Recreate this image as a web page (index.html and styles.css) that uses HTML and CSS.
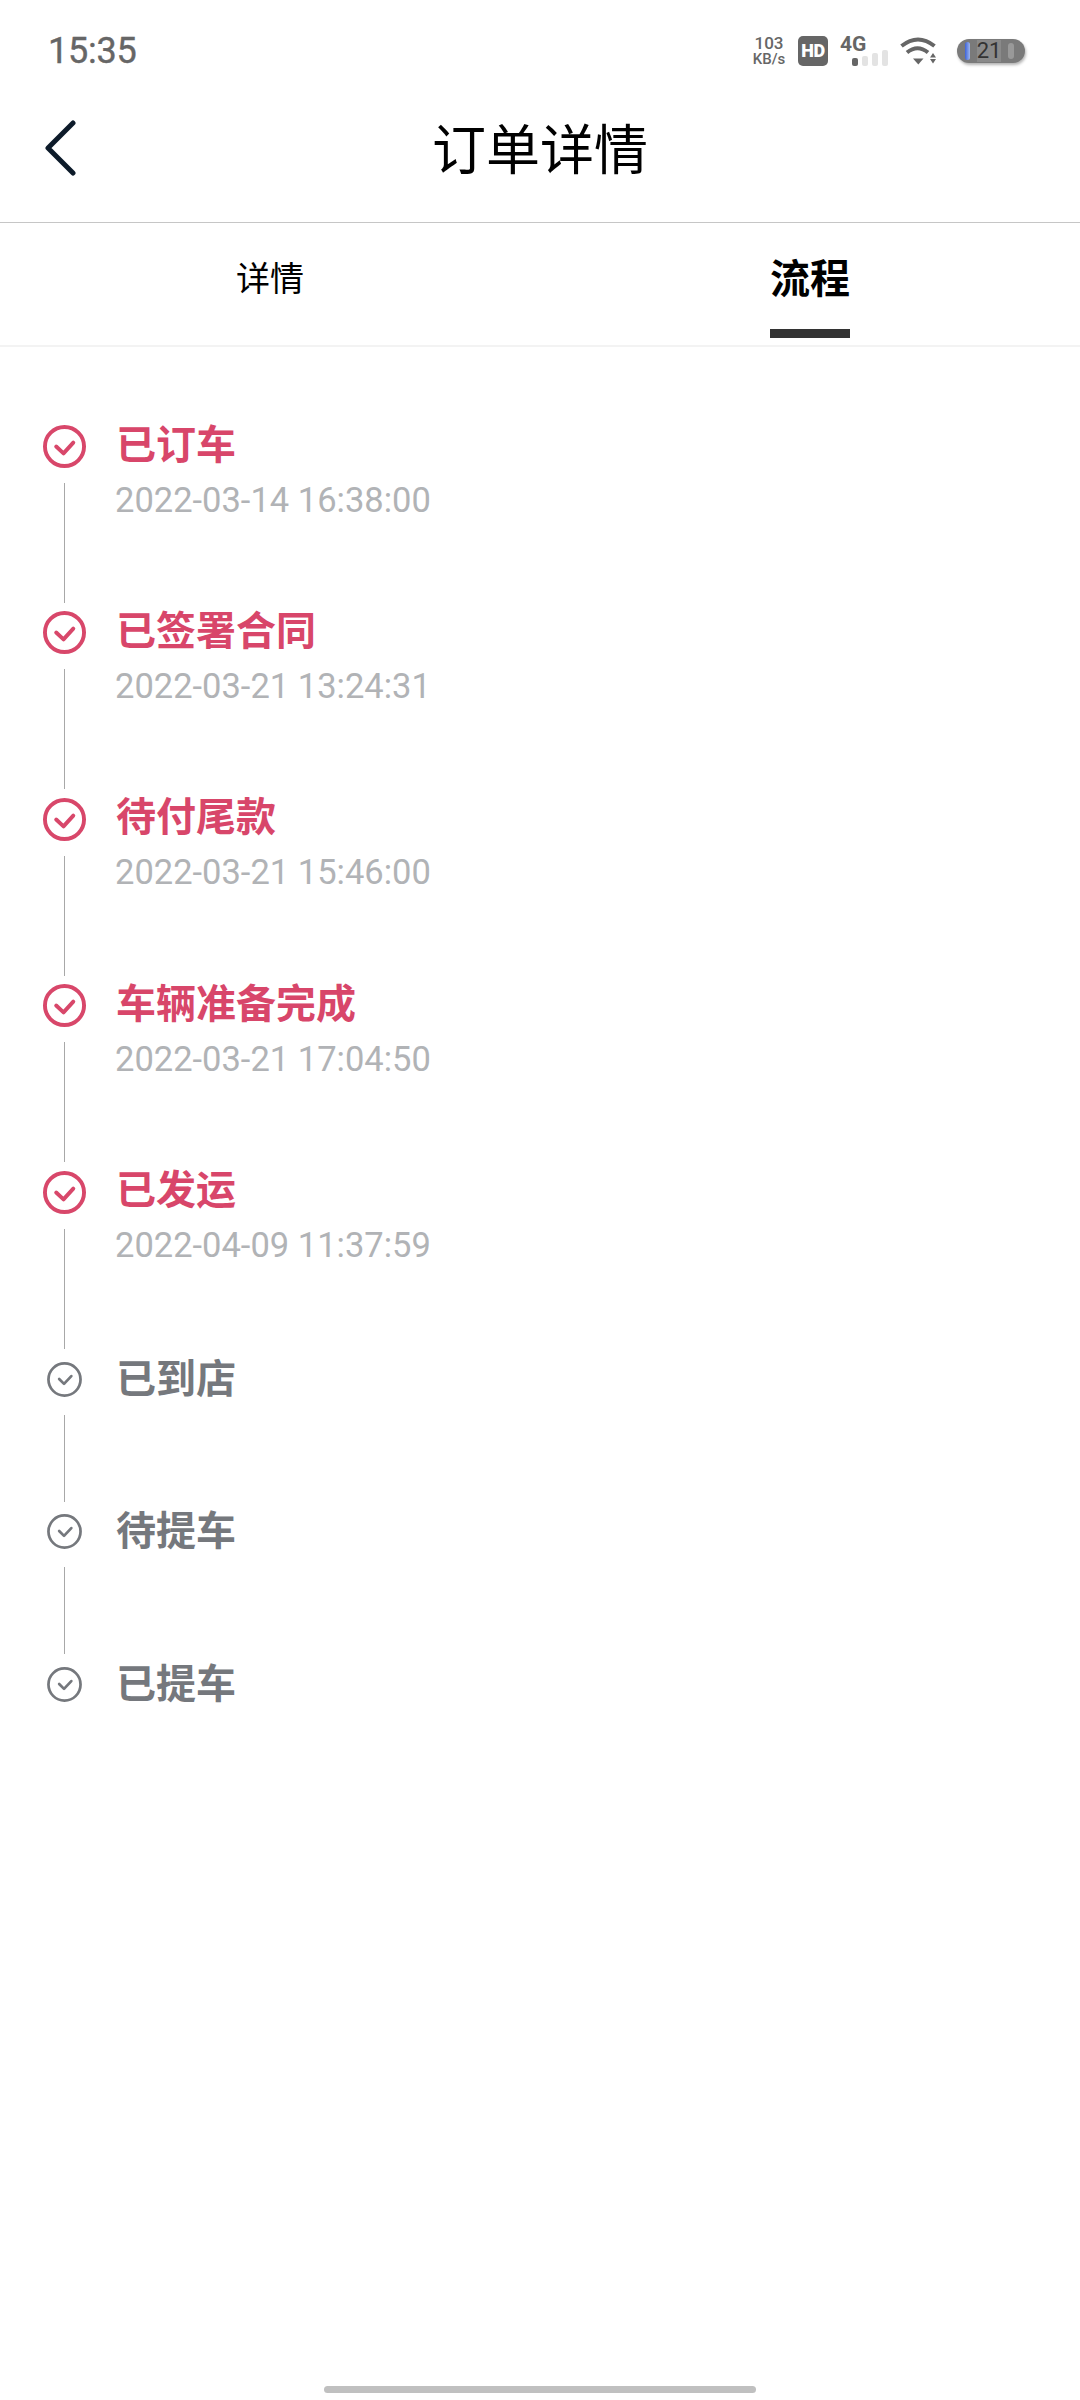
FILE: index.html
```html
<!DOCTYPE html>
<html lang="zh">
<head>
<meta charset="utf-8">
<title>订单详情</title>
<link rel="stylesheet" href="styles.css">
</head>
<body>
<div class="page">
  <div class="status">
    <span class="time">15:35</span>
    <div class="status-icons">
      <div class="speed"><span class="speed-value">103</span><span class="speed-unit">KB/s</span></div>
      <span class="hd">HD</span>
      <div class="net">
        <span class="net-label">4G</span>
        <div class="bars"><i class="bar on b1"></i><i class="bar b2"></i><i class="bar b3"></i><i class="bar b4"></i></div>
      </div>
      <svg class="wifi" viewBox="0 0 38 28" width="38" height="28">
        <path d="M2.500 9Q19-4 35.500 9" fill="none" stroke="#666" stroke-width="4"/>
        <path d="M8 15.500Q18.500 7 29 15.500" fill="none" stroke="#666" stroke-width="4"/>
        <path d="M14 21.500h10.500l-5.200 6z" fill="#666"/>
        <path d="M34 16l3 4.500h-6zM31 22h6l-3 4.500z" fill="#666"/>
      </svg>
      <div class="battery"><i class="cell-low"></i><span class="level">21</span><i class="cell-end"></i></div>
    </div>
  </div>

  <header class="nav">
    <svg class="back" viewBox="0 0 32 56" width="32" height="56">
      <path d="M29 3 4 28l25 25" fill="none" stroke="#0d1b2a" stroke-width="5" stroke-linecap="round" stroke-linejoin="round"/>
    </svg>
    <h1 class="title">订单详情</h1>
  </header>

  <nav class="tabs">
    <div class="tab">详情</div>
    <div class="tab active"><span class="tab-label">流程</span></div>
  </nav>

  <main class="timeline">
    <section class="step done">
      <div class="rail">
        <svg class="icon" viewBox="0 0 44 44"><circle cx="22" cy="22" r="20" /><path d="M13.500 22l7.500 7L31 18"/></svg>
        <i class="line"></i>
      </div>
      <div class="body"><div class="name">已订车</div><div class="date">2022-03-14 16:38:00</div></div>
    </section>
    <section class="step done">
      <div class="rail">
        <svg class="icon" viewBox="0 0 44 44"><circle cx="22" cy="22" r="20" /><path d="M13.500 22l7.500 7L31 18"/></svg>
        <i class="line"></i>
      </div>
      <div class="body"><div class="name">已签署合同</div><div class="date">2022-03-21 13:24:31</div></div>
    </section>
    <section class="step done">
      <div class="rail">
        <svg class="icon" viewBox="0 0 44 44"><circle cx="22" cy="22" r="20" /><path d="M13.500 22l7.500 7L31 18"/></svg>
        <i class="line"></i>
      </div>
      <div class="body"><div class="name">待付尾款</div><div class="date">2022-03-21 15:46:00</div></div>
    </section>
    <section class="step done">
      <div class="rail">
        <svg class="icon" viewBox="0 0 44 44"><circle cx="22" cy="22" r="20" /><path d="M13.500 22l7.500 7L31 18"/></svg>
        <i class="line"></i>
      </div>
      <div class="body"><div class="name">车辆准备完成</div><div class="date">2022-03-21 17:04:50</div></div>
    </section>
    <section class="step done last-done">
      <div class="rail">
        <svg class="icon" viewBox="0 0 44 44"><circle cx="22" cy="22" r="20" /><path d="M13.500 22l7.500 7L31 18"/></svg>
        <i class="line"></i>
      </div>
      <div class="body"><div class="name">已发运</div><div class="date">2022-04-09 11:37:59</div></div>
    </section>
    <section class="step todo">
      <div class="rail">
        <svg class="icon" viewBox="0 0 36 36"><circle cx="18" cy="18" r="16.500" /><path d="M12.500 17.500l5 5L25 14.500"/></svg>
        <i class="line"></i>
      </div>
      <div class="body"><div class="name">已到店</div></div>
    </section>
    <section class="step todo">
      <div class="rail">
        <svg class="icon" viewBox="0 0 36 36"><circle cx="18" cy="18" r="16.500" /><path d="M12.500 17.500l5 5L25 14.500"/></svg>
        <i class="line"></i>
      </div>
      <div class="body"><div class="name">待提车</div></div>
    </section>
    <section class="step todo final">
      <div class="rail">
        <svg class="icon" viewBox="0 0 36 36"><circle cx="18" cy="18" r="16.500" /><path d="M12.500 17.500l5 5L25 14.500"/></svg>
      </div>
      <div class="body"><div class="name">已提车</div></div>
    </section>
  </main>

  <div class="home-bar"></div>
</div>
</body>
</html>
```

FILE: styles.css
```css
* { box-sizing: border-box; }
html, body { margin: 0; padding: 0; background: #fff; }
body { font-family: "Noto Sans CJK SC", "Noto Sans", sans-serif; }
.page { width: 1080px; height: 2400px; display: flex; flex-direction: column; background: #fff; position: relative; overflow: hidden; }

/* status bar */
.status { height: 100px; padding: 2px 55px 0 48px; display: flex; align-items: center; justify-content: space-between; }
.time { font: 400 36px/1 Roboto, sans-serif; color: #666; -webkit-text-stroke: .4px #666; letter-spacing: -.2px; }
.status-icons { display: flex; align-items: center; height: 40px; }
.speed { display: flex; flex-direction: column; align-items: center; width: 36px; color: #666; margin-right: 11px; }
.speed-value { font: 500 17px/16px Roboto, sans-serif; }
.speed-unit { font: 500 15px/16px Roboto, sans-serif; }
.hd { width: 30px; height: 30px; border-radius: 5px; background: #666; color: #fff; font: 900 18px/30px Roboto, sans-serif; text-align: center; letter-spacing: -.5px; margin-right: 12px; }
.net { width: 48px; height: 30px; position: relative; margin-right: 11px; }
.net-label { position: absolute; left: 0; top: -4px; font: 700 21px/24px Roboto, sans-serif; color: #666; }
.bars { position: absolute; left: 12px; top: 10px; height: 20px; width: 36px; display: flex; align-items: flex-end; gap: 4px; }
.bar { width: 6px; background: #e3e3e3; border-radius: 2px; }
.b1 { height: 8px; } .b2 { height: 10px; } .b3 { height: 13px; } .b4 { height: 16px; }
.bar.on { background: #666; }
.wifi { margin-right: 20px; }
.battery { width: 68px; height: 24px; border-radius: 12px; background: #7a7a7a; box-shadow: 1px 2px 3px rgba(0,0,0,.3); display: flex; align-items: center; justify-content: space-between; padding: 0 11px 0 8px; }
.cell-low { width: 5px; height: 18px; border-radius: 3px; background: linear-gradient(90deg, #3d63d8, #9fb7ee); }
.cell-end { width: 6px; height: 16px; border-radius: 3px; background: #999; }
.level { font: 400 22px/1 Roboto, sans-serif; color: #333; background: #8a8a8a; }

/* nav */
.nav { height: 123px; border-bottom: 1px solid #c6c6c6; display: flex; align-items: center; justify-content: center; position: relative; }
.back { position: absolute; left: 44px; top: 20px; }
.title { margin: 0; font-size: 54px; font-weight: 400; line-height: 1; color: #000; position: relative; top: -14px; }

/* tabs */
.tabs { height: 124px; border-bottom: 2px solid #f3f3f3; display: flex; }
.tab { flex: 1; display: flex; justify-content: center; align-items: flex-start; padding-top: 32px; font-size: 34px; line-height: 44px; color: #000; }
.tab.active { padding-top: 26px; font-size: 40px; line-height: 54px; font-weight: 700; }
.tab-label { display: block; height: 89px; width: 80px; text-align: center; border-bottom: 9px solid #333; }

/* timeline */
.timeline { padding: 78px 0 0 43px; display: flex; flex-direction: column; }
.step { display: flex; }
.rail { width: 43px; display: flex; flex-direction: column; align-items: center; flex: none; }
.icon { display: block; fill: none; stroke-width: 4; stroke-linecap: round; stroke-linejoin: round; }
.line { display: block; width: 1px; background: #a8a8a8; }
.body { margin-left: 30px; }
.name { font-size: 40px; font-weight: 700; line-height: 50px; }
.date { font: 400 34.500px/40px Roboto, sans-serif; color: #b1b3b6; margin-top: 13px; margin-left: -1px; }

.done { height: 186.400px; }
.done .icon { width: 43px; height: 43px; stroke: #d8476a; }
.done .line { height: 120px; margin-top: 15px; }
.done .body { margin-top: -8.500px; }
.done .name { color: #d8466a; }
.last-done { height: 191.400px; }

.todo { height: 152.500px; }
.todo .icon { width: 35px; height: 35px; stroke: #75787d; stroke-width: 2.800; }
.todo .line { height: 87px; margin-top: 18px; }
.todo .body { margin-top: -11px; }
.todo .name { color: #75787d; }

.home-bar { position: absolute; left: 324px; bottom: 7px; width: 432px; height: 7px; border-radius: 4px; background: #c0c0c0; }
```
